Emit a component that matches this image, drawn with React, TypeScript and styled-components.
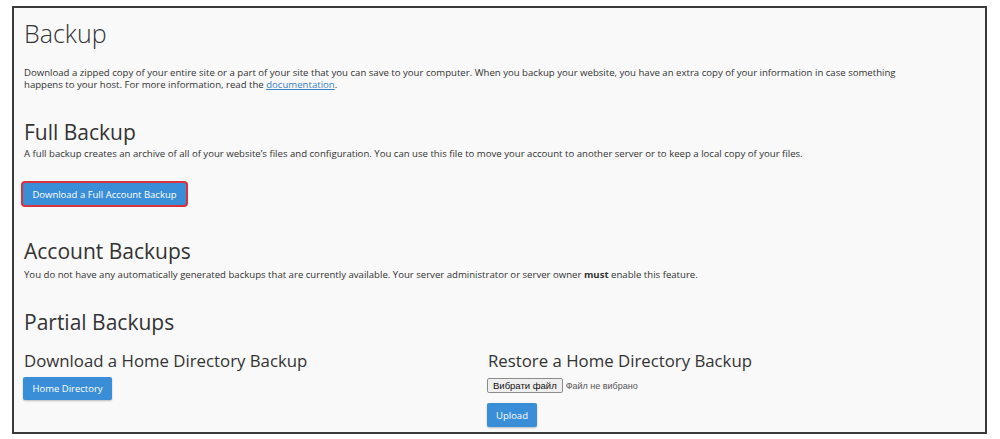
import React from "react";
import styled, { createGlobalStyle } from "styled-components";

const Global = createGlobalStyle`
  html, body { margin: 0; padding: 0; background: #ffffff; }
  body { font-family: "Open Sans", "Noto Sans", sans-serif; color: #333; }
`;

const Frame = styled.div`
  box-sizing: border-box;
  margin: 6px 0 0 12px;
  width: 975px;
  height: 428px;
  border: 2px solid #3a3a3a;
  background: #f9f9f9;
  padding: 9px 30px 0 10px;
  overflow: hidden;
`;

const Title = styled.h1`
  margin: 0;
  font-size: 25px;
  font-weight: 300;
  line-height: 32px;
  color: #333;
`;

const Text = styled.p<{ $mt?: number }>`
  margin: ${(p) => p.$mt ?? 0}px 0 0;
  max-width: 902px;
  font-size: 9.6px;
  line-height: 12px;
  color: #333;
  b { font-weight: 700; }
  a { color: #3a7fc4; text-decoration: underline; }
`;

const Section = styled.h2<{ $mt: number }>`
  margin: ${(p) => p.$mt}px 0 0;
  font-size: 21px;
  font-weight: 400;
  line-height: 32px;
  color: #333;
`;

const SubHead = styled.h3`
  margin: 0;
  font-size: 16.8px;
  font-weight: 400;
  line-height: 22px;
  color: #333;
`;

const Button = styled.button<{ $w: number; $h: number; $outlined?: boolean }>`
  box-sizing: border-box;
  width: ${(p) => p.$w}px;
  height: ${(p) => p.$h}px;
  padding: 0;
  background: #3a8ed8;
  color: #fff;
  border: none;
  border-radius: 2px;
  font-family: "Open Sans", sans-serif;
  font-size: 9.5px;
  box-shadow: ${(p) =>
    p.$outlined ? "0 0 0 2px #d8333c" : "0 1px 2px rgba(0,0,0,0.25)"};
  cursor: pointer;
`;

const ButtonRow = styled.div<{ $mt: number; $ml?: number }>`
  margin: ${(p) => p.$mt}px 0 0 ${(p) => p.$ml ?? 0}px;
  display: flex;
`;

const Columns = styled.div`
  display: grid;
  grid-template-columns: 464px 1fr;
  margin-top: 12px;
`;

const Column = styled.div`
  display: flex;
  flex-direction: column;
`;

const FileRow = styled.div`
  display: flex;
  align-items: center;
  gap: 3px;
  margin: 6px 0 0 -1px;
`;

const FileButton = styled.span`
  box-sizing: border-box;
  display: inline-flex;
  align-items: center;
  height: 15px;
  padding: 0 5px;
  border: 1px solid #8c8c8c;
  border-radius: 2px;
  background: #efefef;
  font-family: "Liberation Sans", Arial, sans-serif;
  font-size: 9.5px;
  color: #111;
`;

const FileLabel = styled.span`
  font-family: "Liberation Sans", Arial, sans-serif;
  font-size: 9px;
  color: #555;
`;

export default function App() {
  return (
    <>
      <Global />
      <Frame>
        <Title>Backup</Title>
        <Text $mt={18}>
          Download a zipped copy of your entire site or a part of your site that you can save to your computer. When
          you backup your website, you have an extra copy of your information in case something happens to your host.
          For more information, read the <a href="#">documentation</a>.
        </Text>
        <Section $mt={25}>Full Backup</Section>
        <Text>
          A full backup creates an archive of all of your website’s files and configuration. You can use this file to
          move your account to another server or to keep a local copy of your files.
        </Text>
        <ButtonRow $mt={23} $ml={-1}>
          <Button $w={163} $h={22} $outlined>
            Download a Full Account Backup
          </Button>
        </ButtonRow>
        <Section $mt={30}>Account Backups</Section>
        <Text $mt={2}>
          You do not have any automatically generated backups that are currently available. Your server administrator
          or server owner <b>must</b> enable this feature.
        </Text>
        <Section $mt={25}>Partial Backups</Section>
        <Columns>
          <Column>
            <SubHead>Download a Home Directory Backup</SubHead>
            <ButtonRow $mt={5} $ml={-1}>
              <Button $w={89} $h={23}>Home Directory</Button>
            </ButtonRow>
          </Column>
          <Column>
            <SubHead>Restore a Home Directory Backup</SubHead>
            <FileRow>
              <FileButton>Вибрати файл</FileButton>
              <FileLabel>Файл не вибрано</FileLabel>
            </FileRow>
            <ButtonRow $mt={10} $ml={-1}>
              <Button $w={50} $h={24}>Upload</Button>
            </ButtonRow>
          </Column>
        </Columns>
      </Frame>
    </>
  );
}
